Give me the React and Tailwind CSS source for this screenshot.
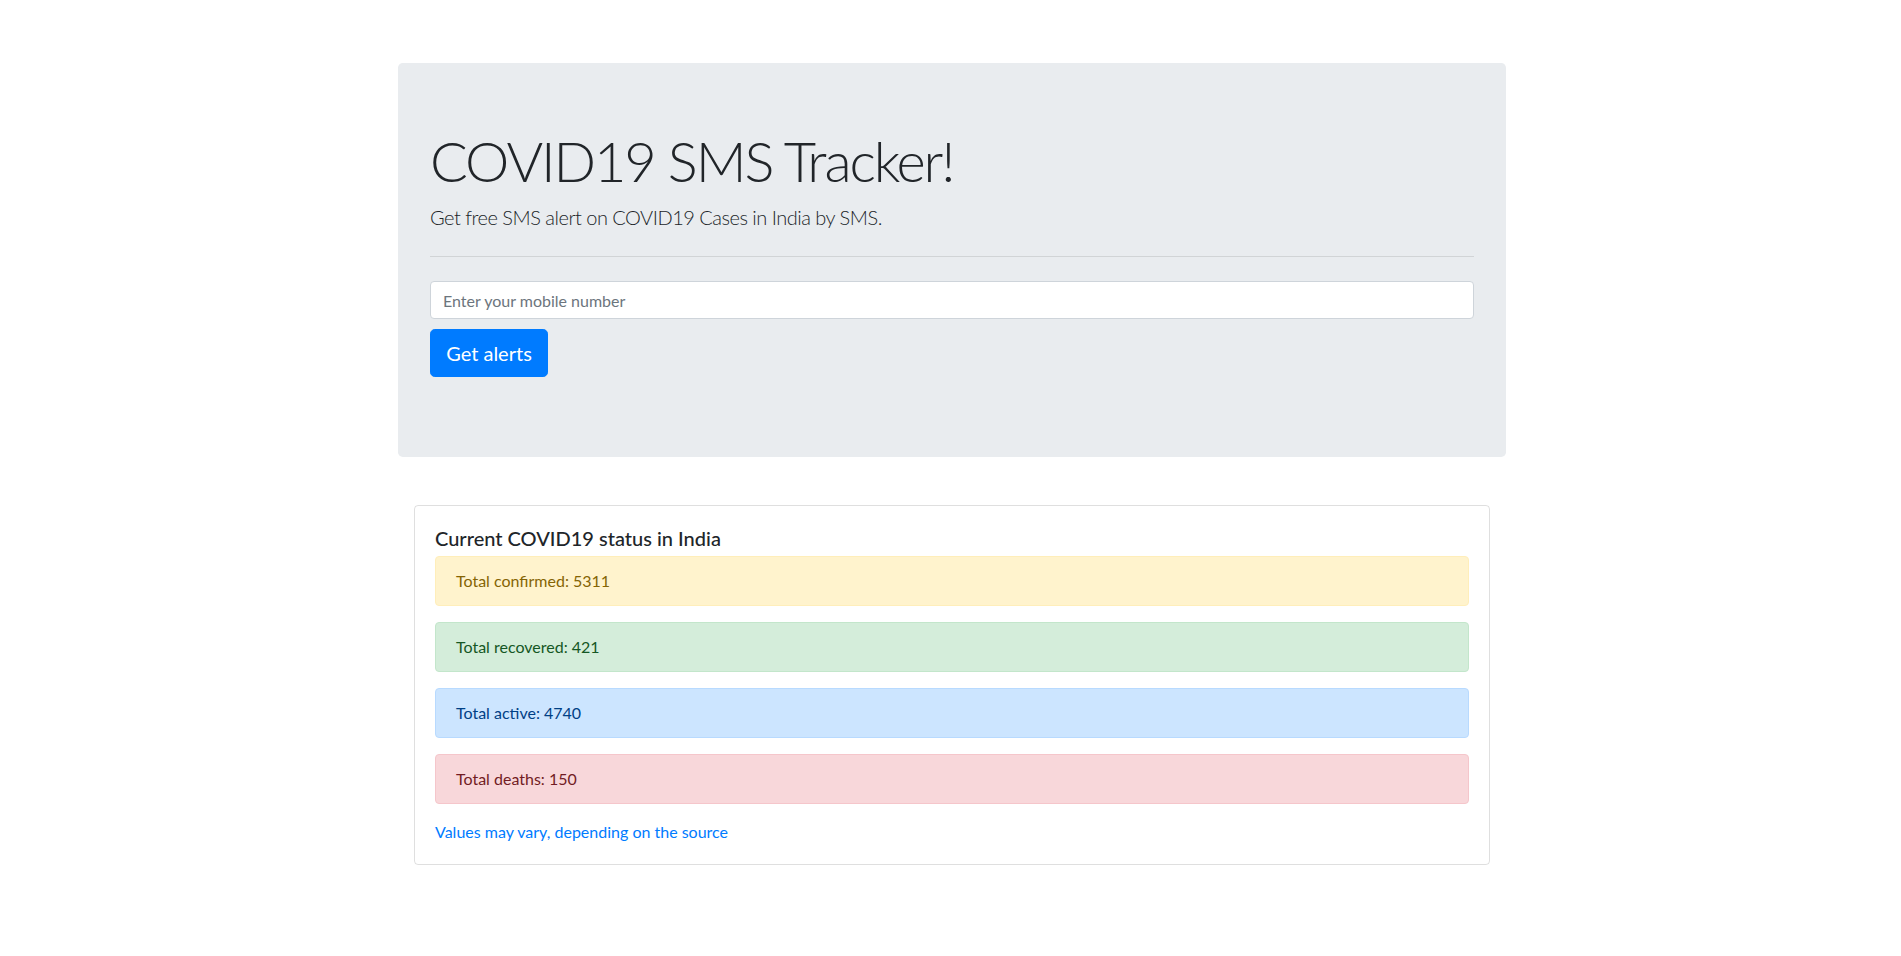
import React from "react";

const stats = [
  { label: "Total confirmed", value: 5311, cls: "bg-[#fff3cd] border-[#ffeeba] text-[#856404]" },
  { label: "Total recovered", value: 421, cls: "bg-[#d4edda] border-[#c3e6cb] text-[#155724]" },
  { label: "Total active", value: 4740, cls: "bg-[#cce5ff] border-[#b8daff] text-[#004085]" },
  { label: "Total deaths", value: 150, cls: "bg-[#f8d7da] border-[#f5c6cb] text-[#721c24]" },
];

export default function App() {
  return (
    <div className="min-h-screen bg-white font-['Lato',sans-serif] text-[#212529] text-base leading-normal">
      <div className="ml-[398px] w-[1108px] pt-[63px]">
        {/* Jumbotron */}
        <div className="mb-8 rounded-[4.8px] bg-[#e9ecef] px-8 py-16">
          <h1 className="mb-2 text-[56px] font-light leading-[1.2] tracking-[-2.1px]">COVID19 SMS Tracker!</h1>
          <p className="mb-4 text-[20px] font-light tracking-[-0.5px]">Get free SMS alert on COVID19 Cases in India by SMS.</p>
          <hr className="my-6 border-t border-black/10" />
          <form className="mb-4" onSubmit={(e) => e.preventDefault()}>
            <input
              type="text"
              placeholder="Enter your mobile number"
              className="block h-[38px] w-full rounded border border-[#ced4da] bg-white px-3 text-base text-[#495057] placeholder:text-[#6c757d] outline-none"
            />
            <button
              type="submit"
              className="mt-[10px] w-[118px] rounded-[4.8px] border border-[#007bff] bg-[#007bff] py-2 text-[20px] leading-[1.5] text-white"
            >
              Get alerts
            </button>
          </form>
        </div>

        {/* Status */}
        <div className="mx-4 pt-4">
          <div className="rounded border border-black/[0.125] px-5 pt-5 pb-5">
            <h5 className="mb-1.5 text-[20px] font-medium leading-[1.2]">Current COVID19 status in India</h5>
            {stats.map((s) => (
              <div key={s.label} className={`mb-4 rounded border px-5 py-3 ${s.cls}`}>
                {s.label}: {s.value}
              </div>
            ))}
            <a href="#" className="text-[#007bff]">Values may vary, depending on the source</a>
          </div>
        </div>
      </div>
    </div>
  );
}
